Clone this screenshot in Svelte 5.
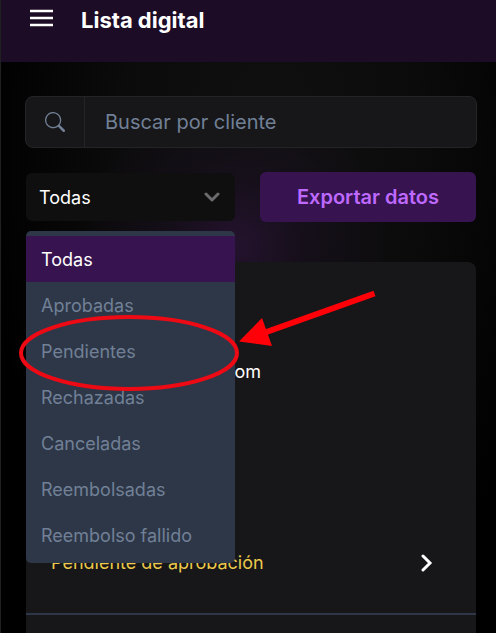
<script>
    const states = [
        'Todas',
        'Aprobadas',
        'Pendientes',
        'Rechazadas',
        'Canceladas',
        'Reembolsadas',
        'Reembolso fallido'
    ]

    let selected = $state('Todas')
    let open = $state(true)
    let query = $state('')

    function choose(name) {
        selected = name
        open = false
    }

    function toggle(e) {
        e.preventDefault()
        open = !open
    }
</script>

<div class="page">
    <header>
        <button class="icon-button" aria-label="Menú">
            <svg width="24" height="18" viewBox="0 0 24 18">
                <path d="M1 2h23M1 9h23M1 16h23" stroke="#fff" stroke-width="2.4"/>
            </svg>
        </button>
        <h1>Lista digital</h1>
    </header>

    <main>
        <div class="search">
            <label for="search" aria-label="Buscar">
                <svg width="20" height="20" viewBox="0 0 16 16" fill="#718096">
                    <path d="M11.742 10.344a6.5 6.5 0 1 0-1.397 1.398h-.001c.03.04.062.078.098.115l3.85 3.85a1 1 0 0 0 1.415-1.414l-3.85-3.85a1.007 1.007 0 0 0-.115-.1zM12 6.5a5.5 5.5 0 1 1-11 0 5.5 5.5 0 0 1 11 0z"/>
                </svg>
            </label>
            <input id="search" type="text" placeholder="Buscar por cliente" bind:value={query}>
        </div>

        <div class="filters">
            <div class="dropdown">
                <select aria-label="Estado" bind:value={selected} onmousedown={toggle}>
                    {#each states as name}
                        <option value={name}>{name}</option>
                    {/each}
                </select>
                <svg class="chevron" width="16" height="10" viewBox="0 0 16 10" fill="none">
                    <path d="M2 2l6 6 6-6" stroke="#6b6b6e" stroke-width="3" stroke-linecap="round" stroke-linejoin="round"/>
                </svg>
                {#if open}
                    <div class="menu" role="listbox" aria-label="Estado">
                        {#each states as name}
                            <button
                                role="option"
                                aria-selected={selected === name}
                                class:selected={selected === name}
                                onclick={() => choose(name)}
                            >{name}</button>
                        {/each}
                    </div>
                {/if}
                <!-- highlights the "Pendientes" option -->
                {#if open}
                    <svg class="callout" width="364" height="106" viewBox="0 0 364 106" fill="none">
                        <ellipse cx="111" cy="67" rx="108" ry="36" stroke="#ee0a14" stroke-width="4"/>
                        <path d="M356.500 7.500L240 49" stroke="#ff0008" stroke-width="6"/>
                        <path d="M221 55.500L244 32L254 60Z" fill="#ff0008"/>
                    </svg>
                {/if}
            </div>
            <button class="export">Exportar datos</button>
        </div>

        <section class="list">
            <article>
                <p class="mail">om</p>
                <div class="status">
                    <span>Pendiente de aprobación</span>
                    <button class="icon-button" aria-label="Ver detalle">
                        <svg width="12" height="18" viewBox="0 0 12 18" fill="none">
                            <path d="M2 2l7 7-7 7" stroke="#fff" stroke-width="3" stroke-linecap="round"/>
                        </svg>
                    </button>
                </div>
            </article>
        </section>
    </main>
</div>

<style>
    :global(body) {
        background: #000;
    }

    .page {
        box-sizing: border-box;
        display: flex;
        flex-direction: column;
        min-height: 100vh;
        border-left: 1px solid #202023;
        color: #fff;
        font-family: Inter, sans-serif;
        font-size: 18px;
        background:
            radial-gradient(circle at 235px 245px, #24122e 0, rgba(28, 16, 36, 0.5) 70px, transparent 160px),
            radial-gradient(ellipse at 270px 150px, #101010 0, #0b0b0b 150px, #000 290px);
    }

    button,
    input,
    select {
        font: inherit;
        border: 0;
        margin: 0;
    }

    button {
        cursor: pointer;
    }

    header {
        box-sizing: border-box;
        display: flex;
        align-items: center;
        gap: 28px;
        height: 62px;
        padding: 0 28px 22px;
        background: #1d0c25;
    }

    h1 {
        margin: 0;
        font-size: 22px;
        font-weight: 700;
        line-height: 40px;
    }

    .icon-button {
        display: flex;
        padding: 0;
        background: none;
    }

    header .icon-button {
        padding-bottom: 4px;
    }

    main {
        flex: 1;
        display: flex;
        flex-direction: column;
        padding: 34px 20px 0 25px;
    }

    .search {
        display: flex;
        height: 50px;
        margin: 0 -1px;
        border: 1px solid #242426;
        border-radius: 8px;
        background: #171719;
    }

    .search label {
        display: flex;
        align-items: center;
        justify-content: center;
        width: 58px;
        border-right: 1px solid #242426;
    }

    .search input {
        flex: 1;
        min-width: 0;
        padding: 0 20px;
        outline: 0;
        background: none;
        color: #fff;
        font-size: 20px;
    }

    .search input::placeholder {
        color: #718096;
        opacity: 1;
    }

    .filters {
        display: flex;
        align-items: center;
        gap: 25px;
        margin-top: 24px;
    }

    .dropdown {
        position: relative;
        flex: 209;
    }

    select {
        display: block;
        width: 100%;
        height: 48px;
        padding: 0 13px;
        appearance: none;
        outline: 0;
        border-radius: 6px;
        background: #0f0f0f;
        color: #fff;
    }

    .chevron {
        position: absolute;
        top: 19px;
        right: 15px;
        pointer-events: none;
    }

    .menu {
        position: absolute;
        top: 58px;
        left: 0;
        right: 0;
        z-index: 1;
        padding: 5px 0;
        border-radius: 5px;
        background: #2d3748;
    }

    .menu button {
        display: block;
        width: 100%;
        height: 46px;
        padding: 0 15px;
        background: none;
        color: #718096;
        text-align: left;
    }

    .menu button.selected {
        background: #371350;
        color: #fff;
    }

    .callout {
        position: absolute;
        top: 113px;
        left: -8px;
        z-index: 2;
        pointer-events: none;
    }

    .export {
        flex: 216;
        height: 50px;
        padding: 0;
        border-radius: 6px;
        background: #371350;
        color: #be69ff;
        font-size: 20px;
        font-weight: 600;
        white-space: nowrap;
    }

    .list {
        flex: 1;
        margin-top: 40px;
        border-radius: 8px 8px 0 0;
        background: #171719;
    }

    article {
        padding: 98px 43px 38px 25px;
        border-bottom: 2px solid #2d3748;
    }

    .mail {
        width: 210px;
        margin: 0;
        line-height: 24px;
        text-align: right;
    }

    .status {
        display: flex;
        align-items: center;
        justify-content: space-between;
        margin-top: 167px;
        line-height: 24px;
        color: #ecc94b;
    }
</style>
